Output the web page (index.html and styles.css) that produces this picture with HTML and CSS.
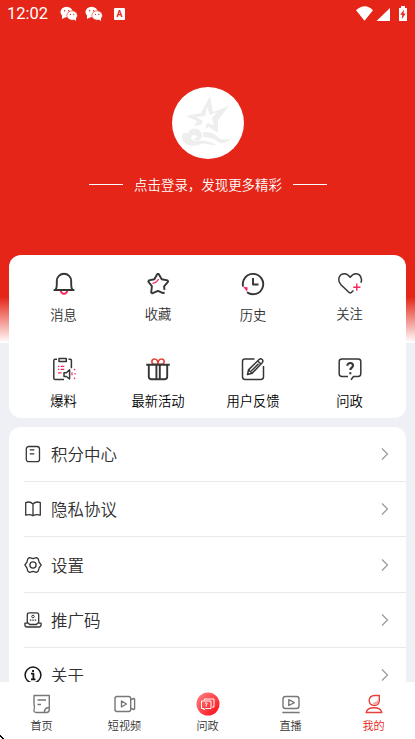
FILE: index.html
```html
<!DOCTYPE html>
<html lang="zh-CN">
<head>
<meta charset="utf-8">
<meta name="viewport" content="width=device-width, initial-scale=1">
<title>我的</title>
<link rel="stylesheet" href="styles.css">
</head>
<body>
<div class="screen">
  <div class="statusbar">
    <span class="time">12:02</span>
    <svg class="wechat" width="18" height="16" viewBox="0 0 18 16"><ellipse cx="6.6" cy="6" rx="6.1" ry="5.3" fill="#fff"/><path d="M2 9l0 4 4-2z" fill="#fff"/><ellipse cx="12.1" cy="9.5" rx="5.3" ry="4.7" fill="#fff" stroke="#e52517" stroke-width=".6"/><path d="M13 13l3 2v-4z" fill="#fff"/><g fill="#e52517"><circle cx="4.6" cy="4.7" r=".7"/><circle cx="8.7" cy="4.7" r=".7"/><circle cx="10.4" cy="8.4" r=".6"/><circle cx="13.8" cy="8.4" r=".6"/></g></svg>
    <svg class="wechat" width="18" height="16" viewBox="0 0 18 16"><ellipse cx="6.6" cy="6" rx="6.1" ry="5.3" fill="#fff"/><path d="M2 9l0 4 4-2z" fill="#fff"/><ellipse cx="12.1" cy="9.5" rx="5.3" ry="4.7" fill="#fff" stroke="#e52517" stroke-width=".6"/><path d="M13 13l3 2v-4z" fill="#fff"/><g fill="#e52517"><circle cx="4.6" cy="4.7" r=".7"/><circle cx="8.7" cy="4.7" r=".7"/><circle cx="10.4" cy="8.4" r=".6"/><circle cx="13.8" cy="8.4" r=".6"/></g></svg>
    <span class="app-badge">A</span>
    <svg class="signals" width="53" height="18" viewBox="0 0 53 18"><path d="M0 5.200Q9-2.500 17 5.200L8.500 15.800z" fill="#fff"/><path d="M20.500 16L34 3v13z" fill="#fff"/><path d="M43 3h2V1h4v2h2v13h-8z" fill="#fff"/><path d="M48.200 4.500l-4 5.200h2.200l-.7 4.500 4-5.600h-2.200z" fill="#e52517"/></svg>
  </div>

  <div class="profile">
    <div class="avatar">
      <svg width="72" height="72" viewBox="0 0 72 72"><path fill="#eeeeef" fill-rule="evenodd" d="M38 9L41 25 57 19 46 33 46 46 37 40 33 42 35 36 42 38 40 31 45 25 38 28 35 20 33 29 24 30 31 34 29 38 22 39 25 34 14 29 29 26z"/><path fill="#eeeeef" d="M10 52C9 46 14 45 16 47 17 40 28 40 30 47 31 53 24 56 21 51 24 53 27 49 23 48 17 48 18 55 26 54 34 52 38 56 45 57 40 60 34 55 29 57 21 60 12 59 10 52zM31 45Q41 44 47 51 53 54 60 51 53 58 46 55 41 50 31 50z"/></svg>
    </div>
    <div class="login"><i class="rule"></i><span>点击登录，发现更多精彩</span><i class="rule"></i></div>
  </div>

  <main class="content">
    <section class="shortcuts">
      <a class="shortcut">
        <svg class="icon" viewBox="0 0 28 28"><path class="pink" d="M10.800 20.500a3.200 3.200 0 0 0 6.400 0" stroke-width="2"/><path d="M3.600 20h20.800M5.700 19.500c1-1.400 1.100-2.700 1.100-5V11a7.200 7.200 0 0 1 14.400 0v3.500c0 2.300.1 3.600 1.100 5"/></svg>
        <span>消息</span></a>
      <a class="shortcut">
        <svg class="icon" viewBox="0 0 28 28"><path d="M20.600 22.500l-1.600.6-5-2.300-5.800 2.500-1-.8.7-6.300-3.600-4.600.6-1.200 5.500-1.200L13.300 4h1.400l3 5.200 5.900 1.200.5 1.200-4 4.700.4 3.500"/><path class="pink" d="M8.500 13.400c3.200-.5 4.800-1.900 6.100-4.400" stroke-width="1.300"/></svg>
        <span class="raised">收藏</span></a>
      <a class="shortcut">
        <svg class="icon" viewBox="0 0 28 28"><path d="M4.100 16.500A10.200 10.200 0 1 1 8 22.300M14 8v6.500h5.500"/><path d="M4 16.500l4.800 1-.8 4.300z" fill="#f8275c" stroke="none"/></svg>
        <span>历史</span></a>
      <a class="shortcut">
        <svg class="icon thin" viewBox="0 0 28 28"><path d="M17.500 20.500L15 22.700q-.8.6-1.600 0L5.200 15C.6 10.200 3.200 3.800 8.500 3.800c2.500 0 4.200 1.500 5.700 3.500 1.500-2 3.200-3.500 5.700-3.500 4.300 0 6.700 4.600 5 9"/><path class="pink" d="M20.800 13.600v7.200M17.200 17.200h7.200" stroke-width="1.400"/></svg>
        <span class="raised">关注</span></a>
      <a class="shortcut strong">
        <svg class="icon thin" viewBox="0 0 28 28"><path d="M7 4.300H5.200q-1.400 0-1.400 1.400v17.500q0 1.300 1.400 1.300H14M18.500 4.300h1.900q1 0 1 1.200v7.700M9 3.500h7.300v3H9zM14 17.800h2.300l3.300-3v9.200l-3.300-2.500H14z"/><path class="pink" d="M8 11.300h1.300M10.800 11.300h3.500M8 14.300h1.300M10.800 14.300h3.500M8 17.800h3.500M22 17.300v3M24 15l1.200-1.200M24.500 18.800h1.300M24 22.700l1.200 1" stroke-width="1.200"/></svg>
        <span>爆料</span></a>
      <a class="shortcut strong">
        <svg class="icon" viewBox="0 0 28 28"><path class="red" d="M14 9.200H9.500C7 8.200 7.400 4 10.400 4 13 4 14 6.400 14 9.200zM14 9.200h4.500C21 8.200 20.600 4 17.600 4 15 4 14 6.400 14 9.200z" stroke-width="1.600"/><path d="M2.200 9.800h23.600M4.800 10v11.500q0 2.800 2.800 2.800h12.800q2.800 0 2.800-2.800V10M12.400 10v14M15.800 10v14"/></svg>
        <span>最新活动</span></a>
      <a class="shortcut strong">
        <svg class="icon thin" viewBox="0 0 28 28"><path d="M15.500 4H6Q3.500 4 3.500 6.200v15.600Q3.500 24.500 6 24.500h15.800q2.700 0 2.700-2.700V11M8.500 19.500l1-4.600L20.300 4.300q1.600-1 2.900.2 1.300 1.400.2 2.900L13.200 18.200zM18.800 6l3 3M9.500 14.900l3.700 3.300M12.300 16L19.500 8.700"/></svg>
        <span>用户反馈</span></a>
      <a class="shortcut strong">
        <svg class="icon thin" viewBox="0 0 28 28"><path d="M12 21.500H6q-2.800 0-2.800-2.700V6.500Q3.200 4 6 4h16q2.800 0 2.800 2.500v12.300q0 2.700-2.800 2.700h-4.500l-2.500 3.200"/><path d="M11.300 10.800c0-3.800 5.900-3.600 5.700-.2 0 2-2.700 2-2.700 4.500M14.300 17.300v2" stroke-width="2.100"/></svg>
        <span>问政</span></a>
    </section>

    <section class="menu">
      <a class="row"><svg class="mi" viewBox="0 0 18 18"><rect x="2.300" y="1.500" width="13.200" height="15.200" rx="2.500"/><path d="M5.800 4.800h4.500M5.800 8.800h4.500"/></svg><span>积分中心</span><svg class="chev" viewBox="0 0 8 14"><path d="M1 1.500L6.500 7 1 12.500"/></svg></a>
      <a class="row"><svg class="mi" viewBox="0 0 18 18"><path d="M9 15.700Q5.500 13.700 1.700 15.200V2.600Q6 .9 9 4 12 .9 16.300 2.600V15.200Q12.500 13.700 9 15.700V4.300"/></svg><span>隐私协议</span><svg class="chev" viewBox="0 0 8 14"><path d="M1 1.500L6.500 7 1 12.500"/></svg></a>
      <a class="row"><svg class="mi" viewBox="0 0 18 18"><path d="M5.600 1.600L9 2.700l3.400-1.100 1.900 1.500.8 3.100L17.100 9l-2 2.800-.8 3.100-1.900 1.500L9 15.300l-3.400 1.100-1.900-1.500-.8-3.100L.9 9l2-2.800.8-3.100z"/><circle cx="9" cy="9" r="3.100"/></svg><span>设置</span><svg class="chev" viewBox="0 0 8 14"><path d="M1 1.500L6.500 7 1 12.500"/></svg></a>
      <a class="row"><svg class="mi" viewBox="0 0 18 18"><path d="M3.300 11.800V3.800q0-2 2-2h7.400q2 0 2 2v8M4.500 12.200H.9v1.500q0 2.300 2.300 2.300h11.600q2.300 0 2.300-2.300v-1.500h-3.600l-1 1.300H5.500z"/><circle cx="9" cy="5.500" r="1.300" stroke-width="1"/><path d="M5.900 9.200h1.500M8.300 9.200h1.500M10.700 9.200h1.500"/></svg><span>推广码</span><svg class="chev" viewBox="0 0 8 14"><path d="M1 1.500L6.500 7 1 12.500"/></svg></a>
      <a class="row"><svg class="mi dark" viewBox="0 0 18 18"><circle cx="9" cy="9" r="7.900"/><path d="M7 7.700h2.400v5.600M7 13.300h4.500M9 4v2" stroke-width="1.800"/></svg><span>关于</span><svg class="chev" viewBox="0 0 8 14"><path d="M1 1.500L6.500 7 1 12.500"/></svg></a>
    </section>
  </main>

  <nav class="tabs">
    <a class="tab"><svg viewBox="0 0 24 24"><path d="M4 3.500h15.300v14q0 3-3 3H6.500Q3.500 20.500 4 18 5 16 4 12zM7.500 8h8.500M7.500 12.500h3.500M19.300 15.500q-4.300-.2-5 4.500"/></svg><span>首页</span></a>
    <a class="tab"><svg viewBox="0 0 24 24"><rect x="2" y="4.500" width="15.700" height="15" rx="2"/><path d="M18 7.500l2.800-1q.8 0 .8 1v9q0 1-.8 1L18 16.500M8.500 9l5 3-5 3z"/></svg><span>短视频</span></a>
    <a class="tab"><svg class="ask" viewBox="0 0 24 24"><defs><linearGradient id="ball" x1="0" y1="0" x2="1" y2="1"><stop offset="0" stop-color="#ff8585"/><stop offset="1" stop-color="#fd0712"/></linearGradient></defs><circle cx="12" cy="12" r="11.500" fill="url(#ball)" stroke="none"/><path d="M8.500 8.500V7H18v8h-2M5.500 9H15v7.500H9.500L8 18v-1.500H5.500zM9 11.500q1.300-1.500 2.300 0 0 .8-1.200 1.500v1.500" stroke="#fff" stroke-width="1"/></svg><span>问政</span></a>
    <a class="tab"><svg viewBox="0 0 24 24"><rect x="4" y="4.500" width="16" height="12" rx="2.500"/><path d="M3.300 20.500h17.400M9.800 7.700l5.500 2.900-5.500 2.900z"/></svg><span>直播</span></a>
    <a class="tab active"><svg viewBox="0 0 24 24"><path d="M17.300 3.500v5.200q-.4 4.800-4.900 4.800-5 0-5.200-4.700 0-5.300 5.700-5.300z"/><path d="M16.700 6v3.500q-1 3.500-4.700 3.500L10.500 11q5-1 6.200-5z" fill="#f4aaa6" stroke="none"/><path d="M4.200 20.500q1-4.700 7.800-4.700t7.800 4.700z"/></svg><span>我的</span></a>
  </nav>
  <svg class="corner" width="4" height="4" viewBox="0 0 4 4"><path d="M0 0h1v1h1v1h1v1h1v1H2V3H1V2H0z"/></svg>
</div>
</body>
</html>
```
FILE: styles.css
```css
* { box-sizing: border-box; }

body {
  margin: 0;
  overflow: hidden;
  font-family: "Noto Sans CJK SC", sans-serif;
  font-weight: 350;
  color: #303030;
}

.screen {
  position: relative;
  display: flex;
  flex-direction: column;
  height: 739px;
  background: linear-gradient(#e52517 0, #e52517 297px, #ffffff 343px, #eff0f5 343px);
}

.statusbar {
  display: flex;
  flex: none;
  align-items: center;
  height: 28px;
  padding-left: 7px;
  padding-right: 6px;
  color: #fff;
}

.time {
  width: 53px;
  font: 400 16.5px/28px Roboto, sans-serif;
}

.wechat { margin-right: 7px; }

.app-badge {
  width: 11px;
  height: 12px;
  margin-left: 4px;
  background: #fff;
  border-radius: 1px;
  color: #e52517;
  font: bold 9px/12px Roboto, sans-serif;
  text-align: center;
}

.signals { margin-left: auto; }

.profile {
  display: flex;
  flex: none;
  flex-direction: column;
  align-items: center;
  height: 227px;
  padding-top: 59px;
}

.avatar {
  width: 72px;
  height: 72px;
  border-radius: 50%;
  background: #fff;
}

.avatar svg { display: block; }

.login {
  display: flex;
  align-items: center;
  gap: 11px;
  height: 20px;
  margin-top: 15px;
  padding-left: 1px;
  color: #fff;
  font-size: 13.45px;
  line-height: 20px;
}

.rule {
  width: 34px;
  height: 1px;
  background: #fff;
}

.content {
  flex: 1;
  min-height: 0;
  overflow: hidden;
  padding: 0 9px;
}

.shortcuts {
  display: grid;
  grid-template-columns: 94px 95px 95px 98px;
  grid-template-rows: 86px 62px;
  height: 162.5px;
  padding: 15px 7.5px 0;
  border-radius: 12px;
  background: #fff;
}

.shortcut {
  display: flex;
  flex-direction: column;
  align-items: center;
  font-size: 13.3px;
  line-height: 20px;
}

.shortcut span { margin-top: 7px; }
.shortcut .raised { margin-top: 6px; }
.strong { color: #000; }

.icon {
  width: 28px;
  height: 28px;
  fill: none;
  stroke: #363636;
  stroke-width: 1.9;
  stroke-linejoin: round;
}

.strong .icon { margin-top: -1px; }
.shortcut.strong span { margin-top: 8px; }
.icon.thin { stroke-width: 1.5; }
.pink { stroke: #f8275c; }
.red { stroke: #e54139; }

.menu {
  margin-top: 9px;
  padding-top: 0.3px;
  padding-left: 15px;
  border-radius: 12px;
  background: #fff;
}

.row {
  display: flex;
  align-items: center;
  height: 55.3px;
  padding-right: 17px;
  border-bottom: 1px solid #e9e9eb;
  font-size: 16.5px;
}

.mi {
  width: 18px;
  height: 18px;
  margin-right: 9px;
  fill: none;
  stroke: #363636;
  stroke-width: 1.3;
  stroke-linejoin: round;
}

.mi.dark { stroke: #161616; stroke-width: 1.5; }

.chev {
  width: 8px;
  height: 14px;
  margin-left: auto;
  fill: none;
  stroke: #999;
  stroke-width: 1.2;
}

.tabs {
  display: grid;
  flex: none;
  grid-template-columns: repeat(5, 1fr);
  height: 57px;
  padding-top: 10px;
  background: #fff;
}

.tab {
  display: flex;
  flex-direction: column;
  align-items: center;
  font-size: 11.1px;
  line-height: 16px;
  color: #333;
}

.tab svg {
  width: 24px;
  height: 24px;
  fill: none;
  stroke: #777;
  stroke-width: 1.4;
  stroke-linejoin: round;
}

.tab span { margin-top: 1px; }
.tab.active { color: #e52517; }
.tab.active svg { stroke: #e5403a; }

.corner {
  position: absolute;
  bottom: 0;
  left: 0;
}
```
